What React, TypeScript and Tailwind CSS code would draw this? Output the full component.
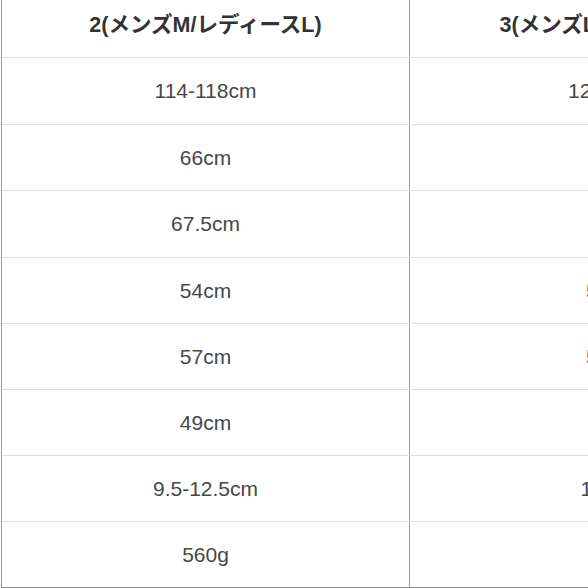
const ROWS = [
  { a: '114-118cm', b: '122-126cm', h: 'h-[67px]' },
  { a: '66cm', b: '68cm', h: 'h-[66px]' },
  { a: '67.5cm', b: '70cm', h: 'h-[67px]' },
  { a: '54cm', b: '56.5cm', h: 'h-[66px]' },
  { a: '57cm', b: '59.5cm', h: 'h-[66px]' },
  { a: '49cm', b: '51cm', h: 'h-[66px]' },
  { a: '9.5-12.5cm', b: '11-14cm', h: 'h-[66px]' },
  { a: '560g', b: '600g', h: 'h-[66px]' },
];

export default function App() {
  return (
    <div
      className="w-[588px] h-[588px] overflow-hidden bg-white"
      style={{ fontFamily: '"Liberation Sans", "Noto Sans CJK JP", sans-serif' }}
    >
      <div className="w-[900px] ml-px border-l border-[#9c9c9c]">
        {/* header */}
        <div className="flex h-[58px] border-b border-[#dedede] text-[21.5px] font-bold text-[#333]">
          <div className="w-[408px] shrink-0 border-r border-[#9c9c9c] flex items-center justify-center pb-[7px]">
            2(メンズM/レディースL)
          </div>
          <div className="w-[422px] shrink-0 border-r border-[#9c9c9c] flex items-center justify-center pb-[7px]">
            3(メンズL/レディースXL)
          </div>
        </div>
        {ROWS.map((r, i) => (
          <div
            key={i}
            className={`flex ${r.h} border-b text-[21px] text-[#474747] ${
              i === ROWS.length - 1 ? 'border-[#8a8a8a]' : 'border-[#dedede]'
            }`}
          >
            <div className="w-[408px] shrink-0 border-r border-[#9c9c9c] flex items-center justify-center">
              {r.a}
            </div>
            <div className="w-[422px] shrink-0 border-r border-[#9c9c9c] flex items-center justify-center">
              {r.b}
            </div>
          </div>
        ))}
      </div>
    </div>
  );
}
